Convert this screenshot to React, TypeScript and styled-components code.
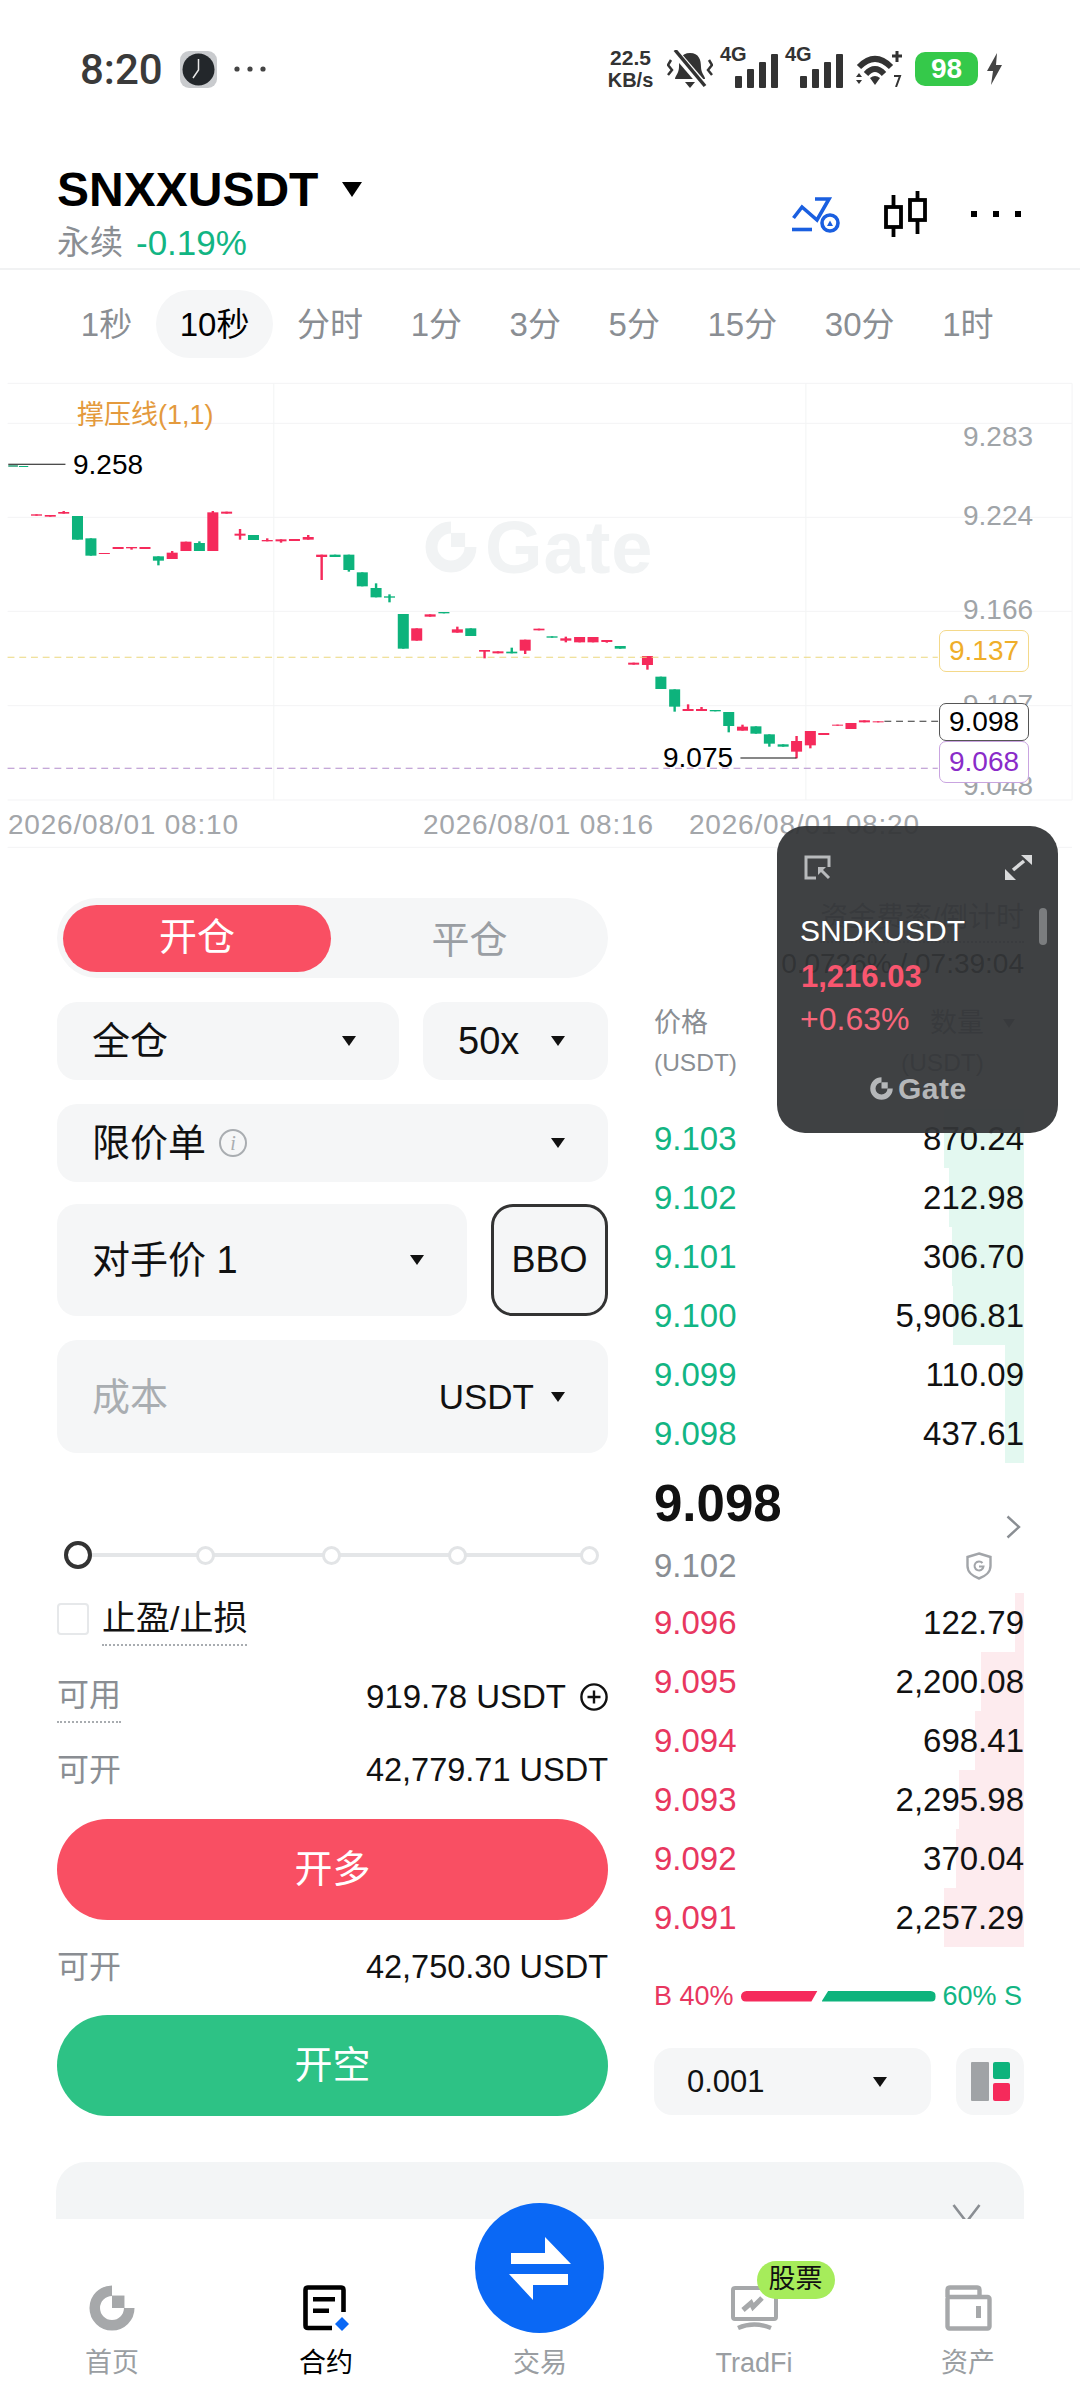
import React from 'react';
import styled, { createGlobalStyle } from 'styled-components';

const FONT = '"Liberation Sans", "Noto Sans CJK SC", sans-serif';
const GREEN = '#12b583';
const RED = '#e8375f';
const GRAY = '#8a8e93';
const FIELD = '#f5f6f7';

const GlobalStyle = createGlobalStyle`
  html, body {
    margin: 0;
    padding: 0;
    background: #fff;
    font-family: ${FONT};
  }
  * { box-sizing: border-box; }
`;

// [x, 实体上, 实体下, 影线上, 影线下, 颜色] 坐标对应 3136x1440 的 viewBox
type Candle = [number, number, number, number, number, 'r' | 'g'];

const candles: Candle[] = [
  [106, 403, 407, 403, 407, 'r'],
  [146, 405, 410, 405, 410, 'r'],
  [185, 396, 401, 393, 401, 'r'],
  [225, 408, 479, 408, 479, 'g'],
  [264, 475, 527, 475, 527, 'g'],
  [303, 519, 522, 519, 522, 'r'],
  [343, 501, 507, 501, 507, 'r'],
  [382, 501, 505, 501, 509, 'r'],
  [421, 501, 507, 501, 507, 'r'],
  [460, 529, 542, 529, 556, 'g'],
  [500, 518, 537, 513, 537, 'r'],
  [540, 485, 513, 485, 513, 'r'],
  [579, 489, 513, 484, 513, 'g'],
  [618, 397, 513, 393, 513, 'r'],
  [658, 395, 401, 395, 401, 'r'],
  [697, 461, 467, 447, 479, 'r'],
  [736, 465, 480, 465, 480, 'g'],
  [776, 480, 484, 475, 484, 'r'],
  [816, 478, 484, 478, 488, 'r'],
  [855, 477, 483, 477, 483, 'r'],
  [895, 471, 479, 465, 479, 'r'],
  [934, 524, 531, 524, 600, 'r'],
  [973, 524, 531, 524, 531, 'g'],
  [1013, 524, 570, 524, 575, 'g'],
  [1052, 577, 619, 577, 619, 'g'],
  [1092, 624, 652, 610, 652, 'g'],
  [1131, 649, 653, 643, 667, 'g'],
  [1171, 702, 806, 702, 806, 'g'],
  [1210, 745, 782, 745, 782, 'r'],
  [1249, 703, 710, 703, 710, 'r'],
  [1289, 696, 700, 696, 700, 'g'],
  [1328, 748, 758, 740, 758, 'r'],
  [1367, 745, 768, 745, 768, 'g'],
  [1407, 810, 815, 810, 835, 'r'],
  [1446, 814, 820, 814, 820, 'r'],
  [1486, 815, 820, 803, 820, 'g'],
  [1525, 779, 812, 779, 822, 'r'],
  [1565, 746, 751, 746, 751, 'r'],
  [1603, 769, 773, 769, 773, 'g'],
  [1643, 775, 782, 770, 787, 'r'],
  [1683, 771, 787, 771, 787, 'r'],
  [1722, 771, 787, 771, 787, 'r'],
  [1762, 780, 786, 780, 788, 'r'],
  [1801, 798, 806, 798, 806, 'g'],
  [1840, 848, 854, 848, 854, 'r'],
  [1880, 828, 855, 828, 869, 'r'],
  [1919, 890, 927, 890, 927, 'g'],
  [1959, 928, 980, 928, 995, 'g'],
  [1998, 987, 993, 973, 993, 'r'],
  [2037, 987, 993, 981, 993, 'r'],
  [2077, 990, 994, 990, 994, 'g'],
  [2116, 996, 1038, 996, 1057, 'g'],
  [2156, 1040, 1052, 1034, 1052, 'r'],
  [2195, 1039, 1061, 1039, 1061, 'g'],
  [2234, 1063, 1091, 1063, 1100, 'g'],
  [2274, 1093, 1100, 1093, 1100, 'g'],
  [2313, 1083, 1115, 1068, 1135, 'r'],
  [2353, 1053, 1096, 1053, 1105, 'r'],
  [2392, 1059, 1065, 1059, 1065, 'r'],
  [2432, 1034, 1037, 1034, 1037, 'r'],
  [2471, 1029, 1047, 1029, 1047, 'r'],
  [2510, 1021, 1027, 1021, 1027, 'r'],
  [2550, 1024, 1027, 1024, 1027, 'r'],
];

const tabs = ['1秒', '10秒', '分时', '1分', '3分', '5分', '15分', '30分', '1时'];

const asks = [
  { price: '9.103', amount: '870.24', depth: 80 },
  { price: '9.102', amount: '212.98', depth: 75 },
  { price: '9.101', amount: '306.70', depth: 72 },
  { price: '9.100', amount: '5,906.81', depth: 71 },
  { price: '9.099', amount: '110.09', depth: 19 },
  { price: '9.098', amount: '437.61', depth: 19 },
];

const bids = [
  { price: '9.096', amount: '122.79', depth: 9 },
  { price: '9.095', amount: '2,200.08', depth: 43 },
  { price: '9.094', amount: '698.41', depth: 49 },
  { price: '9.093', amount: '2,295.98', depth: 65 },
  { price: '9.092', amount: '370.04', depth: 68 },
  { price: '9.091', amount: '2,257.29', depth: 80 },
];

const Page = styled.div`
  position: relative;
  width: 1080px;
  height: 2400px;
  overflow: hidden;
  display: flex;
  flex-direction: column;
  background: #fff;
  color: #111;
`;

/* 状态栏 */
const StatusBar = styled.div`
  height: 138px;
  flex: none;
  display: flex;
  align-items: center;
  justify-content: space-between;
  padding: 0 77px 0 80px;
`;

const StatusLeft = styled.div`
  display: flex;
  align-items: center;
  gap: 17px;
`;

const StatusRight = styled.div`
  display: flex;
  align-items: center;
  gap: 7px;
`;

const Time = styled.span`
  font-family: Roboto, ${FONT};
  font-size: 42px;
  font-weight: 500;
  color: #3a3a3a;
`;

const NetSpeed = styled.div`
  width: 47px;
  margin-right: 6px;
  text-align: center;
  font-weight: 700;
  font-size: 20px;
  line-height: 22px;
  color: #333;
  white-space: nowrap;
`;

const NetValue = styled.div`
  font-size: 21px;
`;

const SignalBox = styled.div`
  position: relative;
  width: 58px;
  height: 40px;
`;

const SignalLabel = styled.span`
  position: absolute;
  left: 0;
  top: -5px;
  font-size: 20px;
  line-height: 20px;
  font-weight: 700;
  color: #333;
`;

const BarsIcon = styled.svg`
  position: absolute;
  right: 0;
  bottom: 1px;
`;

const WifiIcon = styled.svg`
  margin: 0 6px;
`;

const BoltIcon = styled.svg`
  margin-left: 1px;
`;

const Battery = styled.div`
  width: 63px;
  height: 34px;
  border-radius: 10px;
  background: #35c94a;
  color: #fff;
  font-size: 28px;
  font-weight: 700;
  display: flex;
  align-items: center;
  justify-content: center;
`;

/* 标题 */
const Header = styled.div`
  height: 132px;
  flex: none;
  display: flex;
  justify-content: space-between;
  align-items: flex-start;
  padding: 27px 59px 0 57px;
  border-bottom: 2px solid #f1f2f3;
`;

const TitleRow = styled.div`
  display: flex;
  align-items: center;
  gap: 24px;
  height: 48px;
`;

const Title = styled.span`
  font-size: 48px;
  font-weight: 700;
  color: #000;
`;

const SubRow = styled.div`
  display: flex;
  gap: 13px;
  margin-top: 10px;
  line-height: 40px;
  font-size: 33px;
  color: ${GRAY};
`;

const Change = styled.span`
  font-size: 35px;
  color: ${GREEN};
`;

const Actions = styled.div`
  display: flex;
  align-items: center;
  gap: 44px;
  margin-top: 26px;
  height: 46px;
`;

const Caret = styled.span<{ $w?: number; $color?: string }>`
  display: inline-block;
  flex: none;
  width: 0;
  height: 0;
  border-left: ${(p) => (p.$w ?? 14) / 2}px solid transparent;
  border-right: ${(p) => (p.$w ?? 14) / 2}px solid transparent;
  border-top: ${(p) => (p.$w ?? 14) * 0.75}px solid ${(p) => p.$color ?? '#111'};
`;

/* 周期 */
const Tabs = styled.div`
  height: 110px;
  flex: none;
  display: flex;
  align-items: flex-start;
  padding: 20px 0 0 57px;
`;

const Tab = styled.div<{ $active?: boolean }>`
  height: 68px;
  line-height: 69px;
  padding: 0 23.8px;
  border-radius: 34px;
  font-size: 33px;
  color: ${(p) => (p.$active ? '#000' : GRAY)};
  background: ${(p) => (p.$active ? FIELD : 'transparent')};
`;

/* K 线 */
const Chart = styled.div`
  position: relative;
  height: 480px;
  flex: none;
`;

const ChartSvg = styled.svg`
  position: absolute;
  inset: 0;
  width: 1080px;
  height: 480px;
`;

const Watermark = styled.div`
  position: absolute;
  left: 425px;
  top: 142px;
  height: 50px;
  display: flex;
  align-items: center;
  gap: 8px;
  color: #f1f3f4;
  font-size: 74px;
  font-weight: 700;
  letter-spacing: 1px;
`;

const ChartLabel = styled.span<{ $x: number; $y: number; $color?: string; $size?: number }>`
  position: absolute;
  left: ${(p) => p.$x}px;
  top: ${(p) => p.$y}px;
  transform: translateY(-50%);
  font-size: ${(p) => p.$size ?? 28}px;
  line-height: 1;
  color: ${(p) => p.$color ?? '#000'};
  white-space: nowrap;
`;

const DateLabel = styled(ChartLabel)`
  letter-spacing: 0.8px;
  color: #a3a6aa;
`;

const PriceBox = styled.span<{ $y: number; $h: number; $color: string; $border: string }>`
  position: absolute;
  left: 939px;
  top: ${(p) => p.$y}px;
  width: 90px;
  height: ${(p) => p.$h}px;
  display: flex;
  align-items: center;
  justify-content: center;
  background: #fff;
  border: 1.5px solid ${(p) => p.$border};
  border-radius: 7px;
  font-size: 28px;
  color: ${(p) => p.$color};
`;

/* 交易区 */
const Trade = styled.div`
  flex: 1;
  display: grid;
  grid-template-columns: 551px 370px;
  column-gap: 46px;
  align-items: start;
  padding: 38px 0 0 57px;
  min-height: 0;
`;

const FormColumn = styled.div`
  display: flex;
  flex-direction: column;
`;

const Toggle = styled.div`
  height: 80px;
  border-radius: 40px;
  background: ${FIELD};
  display: flex;
  align-items: center;
  padding-left: 6px;
  font-size: 38px;
`;

const ToggleOn = styled.div`
  width: 268px;
  height: 67px;
  line-height: 64px;
  border-radius: 34px;
  background: #f94f63;
  color: #fff;
  text-align: center;
`;

const ToggleOff = styled.div`
  flex: 1;
  padding-bottom: 3px;
  text-align: center;
  color: #9a9ea3;
`;

const FieldRow = styled.div<{ $mt?: number }>`
  display: flex;
  gap: 24px;
  margin-top: ${(p) => p.$mt ?? 24}px;
`;

const Field = styled.div<{ $h?: number; $width?: number }>`
  height: ${(p) => p.$h ?? 78}px;
  width: ${(p) => (p.$width ? `${p.$width}px` : 'auto')};
  flex: ${(p) => (p.$width ? 'none' : 1)};
  border-radius: 20px;
  background: ${FIELD};
  display: flex;
  align-items: center;
  justify-content: space-between;
  padding: 0 43px 0 35px;
  font-size: 38px;
  color: #111;
`;

const FieldLabel = styled.span<{ $muted?: boolean }>`
  display: flex;
  align-items: center;
  gap: 13px;
  margin-bottom: 7px;
  color: ${(p) => (p.$muted ? '#a9adb1' : '#111')};
`;

const Info = styled.span`
  width: 28px;
  height: 28px;
  margin-top: 7px;
  border: 2.5px solid #a9adb1;
  border-radius: 50%;
  display: flex;
  align-items: center;
  justify-content: center;
  font-family: "Liberation Serif", serif;
  font-style: italic;
  font-size: 20px;
  color: #a9adb1;
`;

const BboButton = styled.div`
  width: 117px;
  height: 112px;
  flex: none;
  border: 3px solid #333;
  border-radius: 22px;
  background: ${FIELD};
  display: flex;
  align-items: center;
  justify-content: center;
  font-size: 36px;
`;

const UnitPick = styled.span`
  display: flex;
  align-items: center;
  gap: 17px;
  font-size: 35px;
`;

const Slider = styled.div`
  position: relative;
  height: 28px;
  margin: 88px 0 0 7px;
  display: flex;
  align-items: center;
  gap: 107px;
`;

const SliderTrack = styled.div`
  position: absolute;
  left: 14px;
  width: 520px;
  top: 12px;
  height: 4px;
  background: #e4e6e8;
`;

const SliderDot = styled.span`
  position: relative;
  width: 19px;
  height: 19px;
  border-radius: 50%;
  background: #fff;
  border: 3px solid #e2e4e6;

  &:last-child {
    margin-left: 6px;
  }
`;

const SliderKnob = styled.span`
  position: relative;
  width: 28px;
  height: 28px;
  margin-right: -3px;
  border-radius: 50%;
  background: #fff;
  border: 4px solid #333;
`;

const TpslRow = styled.div`
  display: flex;
  align-items: flex-start;
  gap: 13px;
  margin-top: 31px;
`;

const CheckBox = styled.span`
  width: 32px;
  height: 32px;
  margin-top: 3px;
  border: 2px solid #e6e8ea;
  border-radius: 4px;
`;

const DottedLabel = styled.span<{ $color?: string; $size?: number }>`
  display: inline-block;
  font-size: ${(p) => p.$size ?? 34}px;
  line-height: 36px;
  padding-bottom: 8px;
  border-bottom: 2px dotted #a8acb0;
  color: ${(p) => p.$color ?? '#111'};
`;

const InfoRow = styled.div<{ $mt: number }>`
  display: flex;
  justify-content: space-between;
  align-items: flex-start;
  margin-top: ${(p) => p.$mt}px;
  line-height: 40px;
  font-size: 32.5px;
`;

const InfoKey = styled.span`
  font-size: 32px;
  color: ${GRAY};
`;

const InfoValue = styled.span<{ $size?: number }>`
  display: flex;
  align-items: center;
  gap: 14px;
  font-size: ${(p) => p.$size ?? 32.5}px;
`;

const BigButton = styled.div<{ $bg: string; $mt: number }>`
  height: 101px;
  margin-top: ${(p) => p.$mt}px;
  padding-bottom: 8px;
  border-radius: 51px;
  background: ${(p) => p.$bg};
  color: #fff;
  font-size: 38px;
  display: flex;
  align-items: center;
  justify-content: center;
`;

/* 盘口 */
const BookColumn = styled.div`
  display: flex;
  flex-direction: column;
  font-size: 33px;
`;

const Funding = styled.div`
  text-align: right;
  font-size: 28px;
`;

const FundingLabel = styled.span`
  display: inline-block;
  line-height: 40px;
  padding-bottom: 3px;
  border-bottom: 2px dotted #a8acb0;
  color: ${GRAY};
`;

const FundingValue = styled.div`
  line-height: 36px;
  margin-top: 3px;
`;

const BookHead = styled.div`
  display: flex;
  justify-content: space-between;
  margin-top: 23px;
  color: ${GRAY};
  font-size: 27px;
  line-height: 36px;
`;

const HeadCell = styled.div<{ $right?: boolean }>`
  display: flex;
  flex-direction: column;
  gap: 4px;
  align-items: ${(p) => (p.$right ? 'flex-end' : 'flex-start')};
  padding-right: ${(p) => (p.$right ? 40 : 0)}px;
`;

const HeadQty = styled.span`
  position: relative;
`;

const HeadCaret = styled.span`
  position: absolute;
  right: -31px;
  top: 14px;
  display: flex;
`;

const HeadUnit = styled.span`
  font-size: 24.5px;
`;

const BookRows = styled.div<{ $mt: number }>`
  margin-top: ${(p) => p.$mt}px;
`;

const BookRow = styled.div`
  position: relative;
  height: 59px;
  display: flex;
  align-items: center;
  justify-content: space-between;
`;

const DepthBar = styled.div<{ $bg: string }>`
  position: absolute;
  top: 0;
  right: 0;
  bottom: 0;
  background: ${(p) => p.$bg};
`;

const Price = styled.span<{ $color: string }>`
  position: relative;
  color: ${(p) => p.$color};
`;

const Amount = styled.span`
  position: relative;
  color: #111;
`;

const MidRow = styled.div`
  display: flex;
  justify-content: space-between;
  align-items: flex-end;
  margin-top: 11px;
  height: 60px;
`;

const MidPrice = styled.span`
  font-size: 51px;
  line-height: 60px;
  font-weight: 700;
  color: #111;
`;

const MidChevron = styled.svg`
  margin: 0 3px -5px 0;
`;

const MarkRow = styled.div`
  display: flex;
  justify-content: space-between;
  align-items: center;
  height: 40px;
  margin-top: 12px;
  padding-right: 32px;
  color: ${GRAY};
`;

const RatioRow = styled.div`
  display: flex;
  align-items: center;
  height: 30px;
  margin-top: 34px;
  font-size: 27px;
`;

const RatioText = styled.span<{ $color: string }>`
  color: ${(p) => p.$color};
  white-space: nowrap;
`;

const RatioBuy = styled.div`
  width: 77px;
  height: 11px;
  margin-left: 7px;
  background: #f52a5b;
  border-radius: 6px 0 0 6px;
  clip-path: polygon(0 0, 100% 0, 92% 100%, 0 100%);
`;

const RatioSell = styled.div`
  width: 114px;
  height: 11px;
  margin: 0 7px 0 4px;
  background: #0db37c;
  border-radius: 0 6px 6px 0;
  clip-path: polygon(6% 0, 100% 0, 100% 100%, 0 100%);
`;

const BookFooter = styled.div`
  display: flex;
  justify-content: space-between;
  margin-top: 37px;
`;

const PrecisionPick = styled.div`
  width: 277px;
  height: 67px;
  padding: 0 44px 0 33px;
  border-radius: 18px;
  background: ${FIELD};
  display: flex;
  align-items: center;
  justify-content: space-between;
  font-size: 31px;
`;

const LayoutButton = styled.div`
  width: 68px;
  height: 67px;
  border-radius: 18px;
  background: ${FIELD};
  display: flex;
  align-items: center;
  justify-content: center;
`;

/* 底部 */
const FoldCard = styled.div`
  height: 57px;
  flex: none;
  margin: 0 56px;
  padding: 42px 43px 0 0;
  border-radius: 30px 30px 0 0;
  background: #f3f5f6;
  overflow: hidden;
  display: flex;
  justify-content: flex-end;
  align-items: flex-start;
`;

const Nav = styled.div`
  height: 181px;
  flex: none;
  display: grid;
  grid-template-columns: repeat(5, 214px);
  padding: 66px 0 0 5px;
  background: #fff;
`;

const NavItem = styled.div<{ $active?: boolean }>`
  display: flex;
  flex-direction: column;
  align-items: center;
  gap: 15px;
  font-size: 27px;
  line-height: 34px;
  color: ${(p) => (p.$active ? '#000' : '#9a9ea2')};
`;

const NavSlot = styled.div`
  position: relative;
  width: 47px;
  height: 46px;
  display: flex;
  justify-content: center;
`;

const SwapButton = styled.div`
  position: absolute;
  left: -42px;
  top: -82px;
  width: 129px;
  height: 130px;
  border-radius: 50%;
  background: #0a68f5;
`;

const StockBadge = styled.span`
  position: absolute;
  left: 26px;
  top: -24px;
  width: 78px;
  height: 38px;
  border-radius: 19px;
  background: #a6ec5b;
  color: #111;
  font-size: 27px;
  line-height: 37px;
  text-align: center;
`;

/* 悬浮窗 */
const Floating = styled.div`
  position: absolute;
  left: 777px;
  top: 826px;
  width: 281px;
  height: 307px;
  padding: 29px 26px 0 23px;
  border-radius: 28px;
  background: rgba(51, 53, 55, 0.94);
  color: #fff;
  display: flex;
  flex-direction: column;
`;

const FloatingIcons = styled.div`
  display: flex;
  justify-content: space-between;
  padding-left: 4px;
  height: 25px;
`;

const FloatingName = styled.div`
  margin-top: 33px;
  font-size: 30px;
  line-height: 36px;
`;

const FloatingPrice = styled.div`
  margin: 10px 0 0 1px;
  font-size: 31px;
  line-height: 36px;
  font-weight: 700;
  color: #f9566f;
`;

const FloatingChange = styled.div`
  margin-top: 6px;
  font-size: 32px;
  line-height: 36px;
  color: #f9667b;
`;

const FloatingBrand = styled.div`
  margin: 40px 0 0 70px;
  height: 23px;
  display: flex;
  align-items: center;
  gap: 5px;
  font-size: 30px;
  font-weight: 700;
  letter-spacing: 0.5px;
  color: #b5b7b9;
`;

const FloatingScroll = styled.div`
  position: absolute;
  right: 11px;
  top: 82px;
  width: 8px;
  height: 37px;
  border-radius: 4px;
  background: #7b7d7f;
`;

const GateMark: React.FC<{ size: number; color: string }> = ({ size, color }) => (
  <svg width={size} height={size} viewBox="0 0 48 48">
    <path d="M24 6 A18 18 0 1 0 42 24" fill="none" stroke={color} strokeWidth="11" />
    <rect x="24" y="11" width="13" height="13" fill={color} />
  </svg>
);

const Candles: React.FC = () => (
  <ChartSvg viewBox="0 0 3136 1440" preserveAspectRatio="none">
    <g fill="#f3f4f5">
      {[10, 130, 412, 694, 977, 1260, 1402].map((y) => (
        <rect key={y} x="22" y={y - 1.5} width="3091" height="3" />
      ))}
      {[795, 2340, 3113].map((x) => (
        <rect key={x} x={x - 1.5} y="10" width="3" height="1250" />
      ))}
    </g>
    <rect x="24" y="256" width="28" height="4" fill="#0c8f63" />
    <rect x="55" y="258" width="27" height="3" fill="#0db37c" />
    <line x1="24" y1="253" x2="190" y2="253" stroke="#111" strokeWidth="3" />
    {candles.map(([x, top, bottom, wickTop, wickBottom, side]) => {
      const fill = side === 'r' ? '#f52a5b' : '#0db37c';
      return (
        <g key={x} fill={fill}>
          <rect x={x - 3.5} y={wickTop} width="7" height={wickBottom - wickTop} />
          <rect x={x - 16} y={top} width="32" height={bottom - top} />
        </g>
      );
    })}
    <line x1="22" y1="832" x2="2723" y2="832" stroke="#ecd77e" strokeWidth="3" strokeDasharray="20 14" />
    <line x1="22" y1="1165" x2="2723" y2="1165" stroke="#b28ccb" strokeWidth="3" strokeDasharray="20 14" />
    <line x1="2568" y1="1024" x2="2729" y2="1024" stroke="#333" strokeWidth="3" strokeDasharray="20 14" />
    <line x1="2150" y1="1134" x2="2313" y2="1134" stroke="#111" strokeWidth="3" />
  </ChartSvg>
);

const Bars: React.FC = () => (
  <BarsIcon width="43" height="34" viewBox="0 0 43 34" fill="#333">
    <rect x="0" y="22" width="7" height="12" rx="1" />
    <rect x="12" y="15" width="7" height="19" rx="1" />
    <rect x="24" y="8" width="7" height="26" rx="1" />
    <rect x="36" y="0" width="7" height="34" rx="1" />
  </BarsIcon>
);

const App: React.FC = () => {
  return (
    <Page>
      <GlobalStyle />
      <StatusBar>
        <StatusLeft>
          <Time>8:20</Time>
          <svg width="37" height="37" viewBox="0 0 37 37">
            <rect width="37" height="37" rx="9" fill="#c9cbce" />
            <circle cx="18.5" cy="18.5" r="16" fill="#23272b" />
            <path d="M18.5 8 V19 L13 27" fill="none" stroke="#e8e8e8" strokeWidth="1.5" />
          </svg>
          <svg width="32" height="6" viewBox="0 0 32 6" fill="#444">
            <circle cx="3" cy="3" r="2.6" />
            <circle cx="16" cy="3" r="2.6" />
            <circle cx="29" cy="3" r="2.6" />
          </svg>
        </StatusLeft>
        <StatusRight>
          <NetSpeed>
            <NetValue>22.5</NetValue>
            KB/s
          </NetSpeed>
          <svg width="46" height="38" viewBox="0 0 46 38">
            <path d="M23 3 C14 3 12 10 12 17 C12 23 8 26 8 29 H38 C38 26 34 23 34 17 C34 10 32 3 23 3 Z" fill="#333" />
            <path d="M18 32 H28 L23 38 Z" fill="#333" />
            <path d="M7 1 L38 37" stroke="#fff" strokeWidth="8" />
            <path d="M8 0 L38 36" stroke="#333" strokeWidth="3.5" />
            <path d="M4 10 L1 15 L5 20 L1 25" fill="none" stroke="#333" strokeWidth="2.5" />
            <path d="M42 10 L45 15 L41 20 L45 25" fill="none" stroke="#333" strokeWidth="2.5" />
          </svg>
          <SignalBox>
            <SignalLabel>4G</SignalLabel>
            <Bars />
          </SignalBox>
          <SignalBox>
            <SignalLabel>4G</SignalLabel>
            <Bars />
          </SignalBox>
          <WifiIcon width="46" height="36" viewBox="0 0 46 36">
            <path d="M3 16 Q19 0 35 16" fill="none" stroke="#333" strokeWidth="6" />
            <path d="M10 23 Q19 13 28 23" fill="none" stroke="#333" strokeWidth="6" />
            <path d="M14 27 Q19 23 24 27 L19 34 Z" fill="#333" />
            <path d="M36 5 H46 M41 0 V11" stroke="#333" strokeWidth="3" />
            <path d="M0 26 L3 22 L6 26 Z M0 29 H6 L3 33 Z" fill="#333" />
            <path d="M38 25 H44 L40 36" fill="none" stroke="#333" strokeWidth="2" />
          </WifiIcon>
          <Battery>98</Battery>
          <BoltIcon width="17" height="32" viewBox="0 0 17 32" fill="#444">
            <path d="M11 0 L1 18 H7 L5 32 L16 12 H10 Z" />
          </BoltIcon>
        </StatusRight>
      </StatusBar>

      <Header>
        <div>
          <TitleRow>
            <Title>SNXXUSDT</Title>
            <Caret $w={20} $color="#000" />
          </TitleRow>
          <SubRow>
            永续
            <Change>-0.19%</Change>
          </SubRow>
        </div>
        <Actions>
          <svg width="48" height="37" viewBox="0 0 48 37" fill="none" stroke="#1a5fe0" strokeWidth="3.6">
            <path d="M1.5 22 L10 11 L25 24 L37 3 H23" />
            <path d="M0 33.5 H20" />
            <circle cx="38" cy="27" r="8" />
            <path d="M35 30 L38 24.5 L41 30 Z" fill="#1a5fe0" stroke="none" />
          </svg>
          <svg width="43" height="46" viewBox="0 0 43 46" fill="none" stroke="#000" strokeWidth="3.8">
            <rect x="2" y="16" width="15" height="20" />
            <rect x="26" y="9" width="15" height="20" />
            <path d="M9.5 4 V16 M9.5 36 V46 M33.5 0 V9 M33.5 29 V43" />
          </svg>
          <svg width="50" height="6" viewBox="0 0 50 6" fill="#000">
            <rect x="0" width="6" height="6" />
            <rect x="22" width="6" height="6" />
            <rect x="44" width="6" height="6" />
          </svg>
        </Actions>
      </Header>

      <Tabs>
        {tabs.map((tab) => (
          <Tab key={tab} $active={tab === '10秒'}>
            {tab}
          </Tab>
        ))}
      </Tabs>

      <Chart>
        <Watermark>
          <GateMark size={52} color="#f1f3f4" />
          Gate
        </Watermark>
        <Candles />
        <ChartLabel $x={77} $y={35} $size={27} $color="#e49a3d">撑压线(1,1)</ChartLabel>
        <ChartLabel $x={73} $y={85}>9.258</ChartLabel>
        <ChartLabel $x={663} $y={378}>9.075</ChartLabel>
        <ChartLabel $x={963} $y={57} $color="#a0a4a8">9.283</ChartLabel>
        <ChartLabel $x={963} $y={136} $color="#a0a4a8">9.224</ChartLabel>
        <ChartLabel $x={963} $y={230} $color="#a0a4a8">9.166</ChartLabel>
        <ChartLabel $x={963} $y={325} $color="#a0a4a8">9.107</ChartLabel>
        <ChartLabel $x={963} $y={406} $color="#a0a4a8">9.048</ChartLabel>
        <PriceBox $y={250} $h={42} $color="#efae2a" $border="#f4d98a">9.137</PriceBox>
        <PriceBox $y={361} $h={42} $color="#8a2bc9" $border="#c9a4e0">9.068</PriceBox>
        <PriceBox $y={323} $h={38} $color="#000" $border="#555">9.098</PriceBox>
        <DateLabel $x={8} $y={445}>2026/08/01 08:10</DateLabel>
        <DateLabel $x={423} $y={445}>2026/08/01 08:16</DateLabel>
        <DateLabel $x={689} $y={445}>2026/08/01 08:20</DateLabel>
      </Chart>

      <Trade>
        <FormColumn>
          <Toggle>
            <ToggleOn>开仓</ToggleOn>
            <ToggleOff>平仓</ToggleOff>
          </Toggle>
          <FieldRow>
            <Field>
              <FieldLabel>全仓</FieldLabel>
              <Caret />
            </Field>
            <Field $width={185}>
              50x
              <Caret />
            </Field>
          </FieldRow>
          <FieldRow>
            <Field>
              <FieldLabel>
                限价单
                <Info>i</Info>
              </FieldLabel>
              <Caret />
            </Field>
          </FieldRow>
          <FieldRow $mt={22}>
            <Field $h={112}>
              <FieldLabel>对手价 1</FieldLabel>
              <Caret />
            </Field>
            <BboButton>BBO</BboButton>
          </FieldRow>
          <FieldRow>
            <Field $h={113}>
              <FieldLabel $muted>成本</FieldLabel>
              <UnitPick>
                USDT
                <Caret />
              </UnitPick>
            </Field>
          </FieldRow>
          <Slider>
            <SliderTrack />
            <SliderKnob />
            <SliderDot />
            <SliderDot />
            <SliderDot />
            <SliderDot />
          </Slider>
          <TpslRow>
            <CheckBox />
            <DottedLabel>止盈/止损</DottedLabel>
          </TpslRow>
          <InfoRow $mt={31}>
            <DottedLabel $color={GRAY} $size={32}>可用</DottedLabel>
            <InfoValue $size={33}>
              919.78 USDT
              <svg width="28" height="28" viewBox="0 0 28 28" fill="none" stroke="#111" strokeWidth="2.4">
                <circle cx="14" cy="14" r="12.6" />
                <path d="M14 7.5 V20.5 M7.5 14 H20.5" />
              </svg>
            </InfoValue>
          </InfoRow>
          <InfoRow $mt={27}>
            <InfoKey>可开</InfoKey>
            <InfoValue>42,779.71 USDT</InfoValue>
          </InfoRow>
          <BigButton $bg="#f94f63" $mt={29}>开多</BigButton>
          <InfoRow $mt={27}>
            <InfoKey>可开</InfoKey>
            <InfoValue>42,750.30 USDT</InfoValue>
          </InfoRow>
          <BigButton $bg="#2dc285" $mt={28}>开空</BigButton>
        </FormColumn>

        <BookColumn>
          <Funding>
            <FundingLabel>资金费率/倒计时</FundingLabel>
            <FundingValue>0.0726% / 07:39:04</FundingValue>
          </Funding>
          <BookHead>
            <HeadCell>
              <span>价格</span>
              <HeadUnit>(USDT)</HeadUnit>
            </HeadCell>
            <HeadCell $right>
              <HeadQty>
                数量
                <HeadCaret>
                  <Caret $w={13} $color={GRAY} />
                </HeadCaret>
              </HeadQty>
              <HeadUnit>(USDT)</HeadUnit>
            </HeadCell>
          </BookHead>
          <BookRows $mt={28}>
            {asks.map((row) => (
              <BookRow key={row.price}>
                <DepthBar $bg="#e3f8f0" style={{ width: row.depth }} />
                <Price $color={GREEN}>{row.price}</Price>
                <Amount>{row.amount}</Amount>
              </BookRow>
            ))}
          </BookRows>
          <MidRow>
            <MidPrice>9.098</MidPrice>
            <MidChevron width="15" height="24" viewBox="0 0 15 24" fill="none" stroke={GRAY} strokeWidth="2.4">
              <path d="M1.5 1.5 L13 12 L1.5 22.5" />
            </MidChevron>
          </MidRow>
          <MarkRow>
            9.102
            <svg width="26" height="28" viewBox="0 0 26 28" fill="none" stroke="#a2a5a9" strokeWidth="2.4">
              <path d="M13 1.5 L24.5 5 V14 C24.5 20 19 24.5 13 26.5 C7 24.5 1.5 20 1.5 14 V5 Z" />
              <path d="M16.5 11 A4.5 4.5 0 1 0 17.5 14.5 H13" strokeWidth="2" />
            </svg>
          </MarkRow>
          <BookRows $mt={7}>
            {bids.map((row) => (
              <BookRow key={row.price}>
                <DepthBar $bg="#fdebee" style={{ width: row.depth }} />
                <Price $color={RED}>{row.price}</Price>
                <Amount>{row.amount}</Amount>
              </BookRow>
            ))}
          </BookRows>
          <RatioRow>
            <RatioText $color={RED}>B 40%</RatioText>
            <RatioBuy />
            <RatioSell />
            <RatioText $color={GREEN}>60% S</RatioText>
          </RatioRow>
          <BookFooter>
            <PrecisionPick>
              0.001
              <Caret />
            </PrecisionPick>
            <LayoutButton>
              <svg width="39" height="39" viewBox="0 0 39 39">
                <rect x="0" y="0" width="18" height="39" rx="1" fill="#a0a3a6" />
                <rect x="22" y="0" width="17" height="17" rx="2" fill="#0db37c" />
                <rect x="22" y="21" width="17" height="18" rx="2" fill="#f52a5b" />
              </svg>
            </LayoutButton>
          </BookFooter>
        </BookColumn>
      </Trade>

      <FoldCard>
        <svg width="29" height="20" viewBox="0 0 29 20" fill="none" stroke={GRAY} strokeWidth="2.6">
          <path d="M1.5 1 L14.5 18 L27.5 1" />
        </svg>
      </FoldCard>

      <Nav>
        <NavItem>
          <NavSlot>
            <GateMark size={46} color="#a6a8aa" />
          </NavSlot>
          首页
        </NavItem>
        <NavItem $active>
          <NavSlot>
            <svg width="47" height="46" viewBox="0 0 47 46">
              <path d="M29 43 H5 Q2.5 43 2.5 40.5 V5 Q2.5 2.5 5 2.5 H38 Q40.5 2.5 40.5 5 V27" fill="none" stroke="#000" strokeWidth="4.6" />
              <rect x="10" y="12" width="22" height="4.5" fill="#000" />
              <rect x="10" y="23.5" width="16" height="4.5" fill="#000" />
              <path d="M39 32 L46 39 L39 46 L32 39 Z" fill="#0a68f5" />
            </svg>
          </NavSlot>
          合约
        </NavItem>
        <NavItem>
          <NavSlot>
            <SwapButton>
              <svg width="129" height="130" viewBox="0 0 129 130" fill="#fff">
                <path d="M36 50 H70 V34 L96 61 H36 Z" />
                <path d="M34 71 H93 V82 H58 V97 Z" />
              </svg>
            </SwapButton>
          </NavSlot>
          交易
        </NavItem>
        <NavItem>
          <NavSlot>
            <svg width="47" height="46" viewBox="0 0 47 46" fill="none" stroke="#a6a8aa" strokeWidth="4">
              <rect x="2" y="3" width="43" height="31" rx="2" />
              <path d="M12 25 L20 18 L22 22 L31 13" strokeWidth="5" />
              <path d="M7 43 Q23 36 40 43" strokeWidth="4.5" />
            </svg>
            <StockBadge>股票</StockBadge>
          </NavSlot>
          TradFi
        </NavItem>
        <NavItem>
          <NavSlot>
            <svg width="47" height="46" viewBox="0 0 47 46" fill="none" stroke="#a6a8aa" strokeWidth="4.4">
              <path d="M2.5 12 V5 Q2.5 2.5 5 2.5 H32 Q34.5 2.5 34.5 5 V12" />
              <rect x="2.5" y="12" width="42" height="31.5" rx="2" />
              <path d="M33.5 21 V33" strokeWidth="5" />
            </svg>
          </NavSlot>
          资产
        </NavItem>
      </Nav>

      <Floating>
        <FloatingIcons>
          <svg width="27" height="25" viewBox="0 0 27 25" fill="none" stroke="#b8babc" strokeWidth="3">
            <path d="M12 23 H2 V2 H25 V12" />
            <path d="M16 14 L25 23" strokeWidth="3" />
            <path d="M14 12 H22 L14 20 Z" fill="#b8babc" stroke="none" />
          </svg>
          <svg width="27" height="25" viewBox="0 0 27 25" fill="#d9dadb">
            <path d="M16 0 H27 V10 Z" />
            <path d="M0 14 L11 25 H0 Z" />
            <path d="M8 15 L19 6" stroke="#d9dadb" strokeWidth="3.5" />
          </svg>
        </FloatingIcons>
        <FloatingName>SNDKUSDT</FloatingName>
        <FloatingPrice>1,216.03</FloatingPrice>
        <FloatingChange>+0.63%</FloatingChange>
        <FloatingBrand>
          <GateMark size={23} color="#b5b7b9" />
          Gate
        </FloatingBrand>
        <FloatingScroll />
      </Floating>
    </Page>
  );
};

export default App;
